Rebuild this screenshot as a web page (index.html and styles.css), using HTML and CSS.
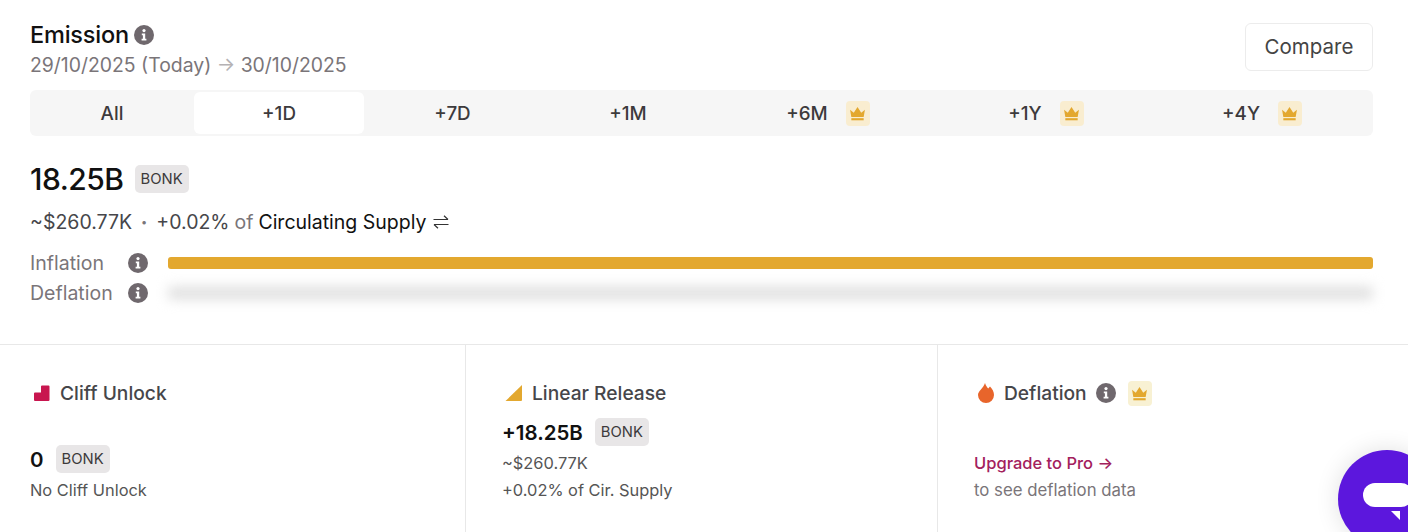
FILE: index.html
```html
<!DOCTYPE html>
<html lang="en">
<head>
  <meta charset="UTF-8" />
  <meta name="viewport" content="width=device-width, initial-scale=1.0" />
  <title>Emission</title>
  <link rel="stylesheet" href="styles.css">
</head>

<body>
  <svg class="defs" width="0" height="0">
    <symbol id="info" viewBox="0 0 20 20">
      <circle cx="10" cy="10" r="10" fill="#6f686d" />
      <circle cx="10" cy="5.6" r="1.6" fill="#fff" />
      <path d="M7.8 8.6h3.4v5.2h1.2v1.7H7.6v-1.7h1.3v-3.5H7.8z" fill="#fff" />
    </symbol>
    <symbol id="crown" viewBox="0 0 16 16">
      <path d="M1 4.400l3.500 2.800L8 1.800l3.500 5.400L15 4.400l-1.200 7H2.200z" fill="#e3a82f" />
      <rect x="2.200" y="12.400" width="11.600" height="2" fill="#e3a82f" />
    </symbol>
  </svg>

  <section class="summary">
    <div class="summary-head">
      <div>
        <h2 class="title">Emission <svg class="info"><use href="#info" /></svg></h2>
        <div class="dates">29/10/2025 (Today) <span class="date-arrow">→</span> 30/10/2025</div>
      </div>
      <button class="compare">Compare</button>
    </div>

    <div class="tabs">
      <div class="tab">All</div>
      <div class="tab active">+1D</div>
      <div class="tab">+7D</div>
      <div class="tab">+1M</div>
      <div class="tab">+6M <span class="crown"><svg><use href="#crown" /></svg></span></div>
      <div class="tab">+1Y <span class="crown"><svg><use href="#crown" /></svg></span></div>
      <div class="tab">+4Y <span class="crown"><svg><use href="#crown" /></svg></span></div>
    </div>

    <div class="amount">18.25B <span class="token">BONK</span></div>
    <div class="supply">
      ~$260.77K <span class="dot">•</span> +0.02% <span class="muted">of</span> <span class="dark">Circulating Supply</span>
      <svg class="swap" viewBox="0 0 16 14"><path d="M0.500 4.500h14.500M11 0.800l4 3.700M15.500 9.500H1M5 13.200L1 9.500" fill="none" stroke="#333" stroke-width="1.200" /></svg>
    </div>

    <div class="bars">
      <div class="bar-label">Inflation</div>
      <svg class="info"><use href="#info" /></svg>
      <div class="bar inflation"></div>
      <div class="bar-label">Deflation</div>
      <svg class="info"><use href="#info" /></svg>
      <div class="bar deflation"></div>
    </div>
  </section>

  <section class="cards">
    <div class="card">
      <div class="card-title">
        <svg class="card-icon" viewBox="0 0 18 18"><path d="M1 9.500a1 1 0 0 1 1-1h6V2.500a1 1 0 0 1 1-1h6.500a1 1 0 0 1 1 1V16a1 1 0 0 1-1 1H2a1 1 0 0 1-1-1z" fill="#c8164f" /></svg>
        Cliff Unlock
      </div>
      <div class="card-value spaced"><span class="num">0</span> <span class="token">BONK</span></div>
      <div class="card-text">No Cliff Unlock</div>
    </div>
    <div class="card">
      <div class="card-title">
        <svg class="card-icon" viewBox="0 0 18 18"><path d="M0.500 17L17 1v15a1 1 0 0 1-1 1z" fill="#e3a82f" /></svg>
        Linear Release
      </div>
      <div class="card-value"><span class="num">+18.25B</span> <span class="token">BONK</span></div>
      <div class="card-text">~$260.77K</div>
      <div class="card-text">+0.02% of Cir. Supply</div>
    </div>
    <div class="card">
      <div class="card-title">
        <svg class="card-icon flame" viewBox="-1 0 18 20"><path d="M7 0C8 3 9 4 10.200 5.500L12 3.500C14.500 6 16 9 16 12A8 8 0 0 1 0 12C0 8 5.500 5 7 0z" fill="#e8652b" /></svg>
        Deflation
        <svg class="info"><use href="#info" /></svg>
        <span class="crown pale"><svg><use href="#crown" /></svg></span>
      </div>
      <div class="upgrade-gap"></div>
      <a class="upgrade">Upgrade to Pro →</a>
      <div class="card-text grey">to see deflation data</div>
    </div>
  </section>

  <div class="chat">
    <span class="chat-pill"></span>
    <span class="chat-tail"></span>
  </div>
</body>
</html>
```

FILE: styles.css
```css
html, body {
  height: 532px;
  overflow: hidden;
}

body {
  font-family: Inter, "Noto Sans", sans-serif;
  background: #fff;
  color: #111;
  margin: 0;
  position: relative;
}

.defs {
  position: absolute;
}

.summary {
  height: 345px;
  box-sizing: border-box;
  padding: 20px 35px 0 30px;
  border-bottom: 1px solid #e8e8e8;
}

.summary-head {
  display: flex;
  justify-content: space-between;
  align-items: flex-start;
  height: 70px;
}

.title {
  display: flex;
  align-items: center;
  gap: 5px;
  font-size: 23.5px;
  font-weight: 500;
  line-height: 30px;
  letter-spacing: -0.2px;
  margin: 0;
}

.info {
  width: 20px;
  height: 20px;
  flex: none;
}

.dates {
  font-size: 19.4px;
  line-height: 30px;
  color: #7a7579;
}

.date-arrow {
  color: #b5b2b4;
}

.compare {
  width: 128px;
  height: 48px;
  margin-top: 3px;
  padding: 0 0 2px;
  background: #fff;
  border: 1px solid #ececec;
  border-radius: 6px;
  font-family: inherit;
  font-size: 20.5px;
  color: #444;
}

.tabs {
  display: grid;
  grid-template-columns: 164px 170px 177px 174px 226px 210px 222px;
  height: 46px;
  background: #f6f6f6;
  border-radius: 6px;
  padding-top: 2px;
  box-sizing: border-box;
}

.tab {
  display: flex;
  align-items: center;
  justify-content: center;
  gap: 18px;
  height: 42px;
  font-size: 18.8px;
  font-weight: 500;
  color: #3d3a3c;
}

.tab.active {
  background: #fff;
  border-radius: 6px;
}

.crown {
  display: flex;
  align-items: center;
  justify-content: center;
  width: 24px;
  height: 25px;
  background: #f9edd0;
  border-radius: 4px;
}

.crown svg {
  width: 17px;
  height: 17px;
}

.crown.pale {
  background: #f8f1d3;
  margin-left: 3px;
}

.amount {
  display: flex;
  align-items: center;
  gap: 11px;
  font-size: 30px;
  font-weight: 500;
  letter-spacing: -0.5px;
  line-height: 36px;
  margin-top: 25px;
}

.token {
  display: inline-block;
  background: #e8e6e7;
  border-radius: 5px;
  padding: 0 6px;
  font-size: 14.8px;
  font-weight: 400;
  line-height: 28px;
  letter-spacing: 0;
  color: #3d3a3c;
}

.supply {
  display: flex;
  align-items: center;
  gap: 5px;
  font-size: 19.5px;
  line-height: 28px;
  color: #46464a;
  margin-top: 11px;
}

.muted {
  color: #7a7579;
}

.dark {
  color: #111;
}

.dot {
  font-size: 11px;
  margin: 0 4px;
  color: #7a7579;
}

.swap {
  width: 16px;
  height: 14px;
  margin-left: 1px;
}

.bars {
  display: grid;
  grid-template-columns: 98px 40px 1fr;
  grid-auto-rows: 30px;
  align-items: center;
  margin-top: 12px;
}

.bar-label {
  font-size: 19.500px;
  color: #7a7579;
}

.bar {
  border-radius: 3px;
}

.inflation {
  height: 12px;
  background: #e3a82f;
}

.deflation {
  height: 14px;
  background: #e2e2e2;
  filter: blur(6px);
}

.cards {
  display: grid;
  grid-template-columns: 465px 472px 1fr;
  height: 187px;
}

.card {
  padding: 34px 0 0 36px;
  border-left: 1px solid #e8e8e8;
}

.card:first-child {
  padding-left: 30px;
  border-left: none;
}

.card-title {
  display: flex;
  align-items: center;
  gap: 9px;
  height: 28px;
  font-size: 19.2px;
  font-weight: 500;
  color: #46464a;
}

.card-icon {
  width: 18px;
  height: 18px;
  margin-left: 3px;
}

.card-icon.flame {
  height: 20px;
}

.card-value {
  display: flex;
  align-items: center;
  gap: 12px;
  height: 30px;
  margin-top: 10px;
}

.card-value.spaced {
  margin-top: 37px;
}

.num {
  font-size: 20.500px;
  font-weight: 600;
}

.card-text {
  font-size: 16.4px;
  line-height: 27px;
  color: #555;
  margin-top: 3px;
}

.card-text + .card-text {
  margin-top: 0;
}

.upgrade-gap {
  height: 43px;
}

.upgrade {
  display: block;
  font-size: 16.5px;
  font-weight: 500;
  line-height: 27px;
  color: #a3215d;
}

.card-text.grey {
  font-size: 16.8px;
  color: #7a7579;
  margin-top: 0;
}

.chat {
  position: absolute;
  left: 1338px;
  top: 450px;
  width: 98px;
  height: 98px;
  background: #5c17dd;
  border-radius: 50%;
  box-shadow: 0 0 24px rgba(0, 0, 0, 0.12);
}

.chat-pill {
  position: absolute;
  left: 25px;
  top: 33px;
  width: 50px;
  height: 24px;
  background: #fff;
  border-radius: 12px;
}

.chat-tail {
  position: absolute;
  left: 53px;
  top: 61px;
  border-top: 9px solid #fff;
  border-left: 9px solid transparent;
}
```
